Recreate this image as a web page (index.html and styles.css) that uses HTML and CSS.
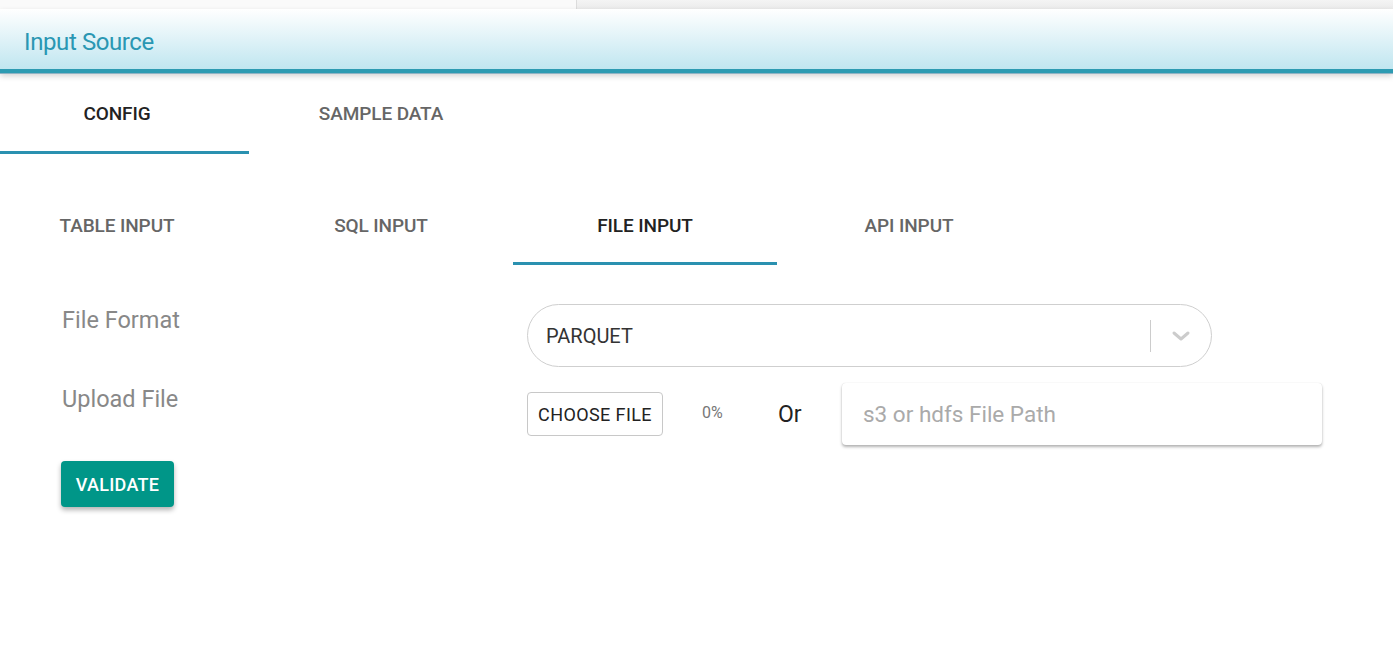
FILE: index.html
```html
<!DOCTYPE html>
<html>
<head>
<meta charset="utf-8">
<link rel="stylesheet" href="styles.css">
</head>
<body>
<div class="topstrip"><div class="ts-left"></div><div class="ts-right"></div></div>
<header class="header"><span class="header-title">Input Source</span></header>
<nav class="tabs outer">
  <div class="tab active">CONFIG</div>
  <div class="tab">SAMPLE DATA</div>
</nav>
<nav class="tabs inner">
  <div class="tab">TABLE INPUT</div>
  <div class="tab">SQL INPUT</div>
  <div class="tab active">FILE INPUT</div>
  <div class="tab">API INPUT</div>
</nav>
<section class="form">
  <div class="row row-format">
    <div class="label">File Format</div>
    <div class="control">
      <div class="select">
        <span class="select-value">PARQUET</span>
        <span class="select-sep"></span>
        <svg class="chev" width="20" height="12" viewBox="0 0 20 12"><polyline points="3,3 10,9 17,3" fill="none" stroke="#cccccc" stroke-width="3" stroke-linecap="round" stroke-linejoin="round"/></svg>
      </div>
    </div>
  </div>
  <div class="row row-upload">
    <div class="label">Upload File</div>
    <div class="control upload">
      <button class="choose">CHOOSE FILE</button>
      <span class="pct">0%</span>
      <span class="or">Or</span>
      <input class="path" type="text" placeholder="s3 or hdfs File Path">
    </div>
  </div>
  <button class="validate">VALIDATE</button>
</section>
</body>
</html>
```
FILE: styles.css
```css
html, body { margin: 0; padding: 0; background: #fff; }
body { font-family: Roboto, "Noto Sans", Arial, sans-serif; overflow: hidden; width: 1393px; height: 663px; }

.topstrip { display: flex; height: 9px; }
.ts-left { width: 576px; background: #fafafa; border-right: 1px solid #dcdcdc; }
.ts-right { flex: 1; background: linear-gradient(#f4f4f4, #ebebeb); }

.header {
  height: 60px;
  display: flex; align-items: center;
  padding-left: 24px;
  background: linear-gradient(#ffffff 0%, #e6f5f9 40%, #c0e6f0 100%);
  border-bottom: 4px solid #2d9bb2;
  box-shadow: 0 1px 0 #8fb3c4, 0 3px 6px rgba(0,0,0,0.18);
  position: relative;
}
.header-title { color: #2a97b3; font-size: 24px; letter-spacing: -0.4px; margin-top: 6px; }

.tabs { display: flex; margin-left: -15px; }
.tabs .tab {
  width: 264px; height: 80px; box-sizing: border-box;
  display: flex; align-items: center; justify-content: center;
  font-size: 19px; font-weight: 500; color: #666; letter-spacing: -0.1px;
  border-bottom: 3px solid transparent;
  padding-top: 1px;
}
.tabs.inner .tab { padding-top: 3px; }
.tabs .tab.active { color: #222; border-bottom-color: #2a91b0; }
.tabs.outer { margin-top: 1px; }
.tabs.inner { margin-top: 31px; }

.form { padding-left: 61px; margin-top: 39px; }
.row { display: flex; }
.label { width: 465px; color: #888; font-size: 23.5px; line-height: 32px; padding-left: 1px; }
.row-upload { margin-top: 16px; }

.select {
  width: 685px; height: 63px; box-sizing: border-box;
  border: 1px solid #cfcfcf; border-radius: 32px;
  display: flex; align-items: center; padding-left: 18px;
}
.select-value { flex: 1; font-size: 20px; color: #333; }
.select-sep { width: 1px; height: 32px; background: #ccc; margin-right: 20px; }
.chev { margin-right: 20px; }

.upload { display: flex; align-items: center; height: 62px; }
.choose {
  width: 136px; height: 44px; flex: none;
  background: #fff; border: 1px solid #c8c8c8; border-radius: 4px;
  font-family: Roboto, Arial, sans-serif; font-size: 18px; color: #222; padding: 0; letter-spacing: 0.4px;
}
.pct { font-size: 16px; color: #777; margin-left: 39px; margin-top: -4px; width: 22px; flex: none; }
.or { font-size: 23px; color: #222; margin-left: 54px; width: 24px; flex: none; }
.path {
  margin-left: 40px; width: 480px; height: 62px; box-sizing: border-box; flex: none;
  border: none; border-radius: 4px; outline: none;
  box-shadow: 0 2px 3px rgba(0,0,0,0.3), 0 0 1px rgba(0,0,0,0.15);
  padding-left: 21px;
  font-family: Roboto, Arial, sans-serif; font-size: 22.5px;
}
.path::placeholder { color: #aaa; }

.validate {
  display: block; margin-top: 16px;
  width: 113px; height: 46px;
  background: #009688; color: #fff; border: none; border-radius: 4px;
  font-family: Roboto, Arial, sans-serif; font-size: 18px; font-weight: 500; letter-spacing: 0.3px;
  box-shadow: 0 3px 5px rgba(0,0,0,0.3);
}
```
